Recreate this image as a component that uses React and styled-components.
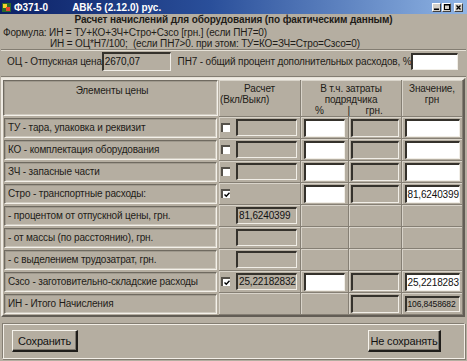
import React from 'react'
import styled, { createGlobalStyle } from 'styled-components'

const Global = createGlobalStyle`
  html, body { margin: 0; padding: 0; background: #b5aea1; }
  body { font-family: "Liberation Sans", Arial, sans-serif; }
`

const Window = styled.div`
  width: 467px;
  height: 361px;
  background: #b5aea1;
  color: #1e1c18;
  font-size: 10px;
  letter-spacing: -0.15px;
  display: flex;
  flex-direction: column;
  overflow: hidden;
`
const TitleBar = styled.div`
  height: 14px;
  flex-shrink: 0;
  display: flex;
  align-items: center;
  padding: 0 4px 0 2px;
  background: linear-gradient(90deg, #0c2166 0%, #2a4f9a 45%, #8fb4e4 100%);
  color: #fff;
  font-weight: bold;
  font-size: 10px;
  letter-spacing: 0;
`
const AppIcon = styled.svg`
  width: 9px;
  height: 11px;
  margin-right: 3px;
`
const TitleText = styled.span`
  margin-right: ${p => p.$gap || 0}px;
  white-space: nowrap;
`
const WinButtons = styled.div`
  margin-left: auto;
  display: flex;
  gap: 1px;
`
const WinButton = styled.div`
  width: 9px;
  height: 9px;
  box-sizing: border-box;
  background: #d4d0c8;
  border: 1px solid;
  border-color: #fff #404040 #404040 #fff;
  display: flex;
  align-items: center;
  justify-content: center;
  margin-left: ${p => p.$gap || 0}px;
`
const Heading = styled.div`
  text-align: center;
  font-weight: bold;
  font-size: 10px;
  letter-spacing: -0.1px;
  line-height: 10px;
  padding-top: 1px;
`
const Formula = styled.div`
  line-height: 11px;
  padding: 2px 0 0 3px;
  white-space: nowrap;
`
const FormulaLine = styled.div`
  padding-left: ${p => p.$indent || 0}px;
`
const PriceRow = styled.div`
  margin: 0 1px;
  height: 28px;
  flex-shrink: 0;
  box-sizing: border-box;
  border-top: 1px solid #837d72;
  border-bottom: 1px solid #837d72;
  box-shadow: inset 0 1px 0 #e6e1d7, 0 1px 0 #e6e1d7;
  display: flex;
  align-items: center;
  padding: 0 8px 3px 6px;
  white-space: nowrap;
`
const Field = styled.div`
  box-sizing: border-box;
  width: ${p => p.$w}px;
  height: ${p => p.$h || 17}px;
  background: ${p => (p.$white ? '#ffffff' : 'transparent')};
  border-style: solid;
  border-width: 2px 1px 1px 2px;
  border-color: #35322c #f1eee7 #f1eee7 #35322c;
  font-size: ${p => p.$small ? 8.5 : 10}px;
  line-height: ${p => (p.$h || 17) - 3}px;
  padding-left: 1px;
  overflow: hidden;
  white-space: nowrap;
  color: #111;
`
const PriceLabel = styled.span`
  margin-left: ${p => p.$gap || 0}px;
`
const Table = styled.div`
  margin: 1px 2px 0 1px;
  flex-shrink: 0;
  border: 2px solid;
  border-color: #efebe3 #625d55 #625d55 #efebe3;
  display: grid;
  grid-template-columns: 216px 82px 48px 53px 61px;
  grid-template-rows: 37px repeat(9, 22px);
`
const Cell = styled.div`
  box-sizing: border-box;
  border-right: 1px solid #857f74;
  border-bottom: 1px solid #857f74;
  box-shadow: inset 1px 1px 0 #d9d4ca;
  display: flex;
  align-items: center;
  justify-content: ${p => p.$left ? 'flex-start' : 'center'};
  padding-left: ${p => p.$left ? 2 : 0}px;
  gap: 6px;
  grid-column: ${p => p.$span ? `span ${p.$span}` : 'auto'};
`
const HeadCell = styled(Cell)`
  flex-direction: column;
  align-items: stretch;
  justify-content: flex-start;
  padding-top: 3px;
  line-height: 11px;
  gap: 0;
`
const HeadLine = styled.div`
  text-align: ${p => p.$align || 'center'};
  padding-left: ${p => p.$pad || 0}px;
  white-space: pre;
`
const LabelCell = styled.div`
  box-sizing: border-box;
  margin: 1px 2px 1px 1px;
  border: 1px solid;
  border-color: #6f6a60 #f4f1ea #f4f1ea #6f6a60;
  box-shadow: inset 1px 1px 0 #9f998d, inset -1px -1px 0 #cfcabf;
  padding: 3px 0 0 3px;
  white-space: nowrap;
  overflow: hidden;
`
const HeadLabel = styled(LabelCell)`
  margin: 0 1px 1px 0;
  text-align: center;
  padding-top: 4px;
`
const Check = styled.div`
  width: 9px;
  height: 9px;
  box-sizing: border-box;
  background: #fff;
  border-style: solid;
  border-width: 2px 0 0 2px;
  border-color: #55514a;
  flex-shrink: 0;
  display: flex;
  align-items: center;
  justify-content: center;
`
const Footer = styled.div`
  margin: 6px 2px 0 2px;
  height: 36px;
  flex-shrink: 0;
  box-sizing: border-box;
  border: 1px solid;
  border-color: #837d72 #f3efe7 #f3efe7 #837d72;
  box-shadow: inset 1px 1px 0 #f3efe7, 1px 1px 0 #837d72;
  display: flex;
  align-items: center;
  justify-content: space-between;
  padding: 0 23px 0 9px;
`
const Button = styled.div`
  box-sizing: border-box;
  width: ${p => p.$w}px;
  height: 22px;
  border-style: solid;
  border-width: 1px 2px 2px 1px;
  border-color: #f6f3ec #1f1d1a #1f1d1a #f6f3ec;
  box-shadow: inset -1px -1px 0 #7c776d;
  display: flex;
  align-items: center;
  justify-content: center;
  font-size: 11px;
  letter-spacing: -0.2px;
  color: #111;
`

const rows = [
  { label: 'ТУ - тара, упаковка и реквизит', check: false, calc: '', extra: true, value: '' },
  { label: 'КО - комплектация оборудования', check: false, calc: '', extra: true, value: '' },
  { label: 'ЗЧ - запасные части', check: false, calc: '', extra: true, value: '' },
  { label: 'Стро - транспортные расходы:', check: true, extra: true, value: '81,6240399' },
  { label: '- процентом от отпускной цены, грн.', calc: '81,6240399' },
  { label: '- от массы (по расстоянию), грн.', calc: '' },
  { label: '- с выделением трудозатрат, грн.', calc: '' },
  { label: 'Сзсо - заготовительно-складские расходы', check: true, calc: '25,221828325', extra: true, value: '25,2218283' },
  { label: 'ИН - Итого Начисления', total: true },
]

function CheckBox({ on }) {
  return (
    <Check>
      {on && (
        <svg width="6" height="6" viewBox="0 0 6 6">
          <path d="M0.5 2.5 L2.3 4.3 L5.5 0.8" stroke="#000" strokeWidth="1.4" fill="none" />
        </svg>
      )}
    </Check>
  )
}

export default function App() {
  return (
    <Window>
      <Global />
      <TitleBar>
        <AppIcon viewBox="0 0 9 11">
          <rect x="0" y="1" width="9" height="9" fill="#2d6b2a" />
          <rect x="1" y="2" width="4" height="4" fill="#f2d22e" />
          <rect x="4" y="5" width="4" height="4" fill="#e8452c" />
        </AppIcon>
        <TitleText $gap={24}>Ф371-0</TitleText>
        <TitleText>АВК-5 (2.12.0) рус.</TitleText>
        <WinButtons>
          <WinButton>
            <svg width="5" height="5" viewBox="0 0 5 5"><rect x="0" y="3.5" width="5" height="1.5" fill="#000" /></svg>
          </WinButton>
          <WinButton>
            <svg width="6" height="6" viewBox="0 0 6 6"><rect x="0.5" y="0.5" width="5" height="5" fill="none" stroke="#000" strokeWidth="1" /><rect x="0" y="0" width="6" height="1.5" fill="#000" /></svg>
          </WinButton>
          <WinButton $gap={2}>
            <svg width="5" height="5" viewBox="0 0 5 5"><path d="M0.5 0.5 L4.5 4.5 M4.5 0.5 L0.5 4.5" stroke="#000" strokeWidth="1.3" /></svg>
          </WinButton>
        </WinButtons>
      </TitleBar>

      <Heading>Расчет начислений для оборудования (по фактическим данным)</Heading>
      <Formula>
        <FormulaLine>Формула: ИН = ТУ+КО+ЗЧ+Стро+Сзсо [грн.] (если ПН7=0)</FormulaLine>
        <FormulaLine $indent={47}>ИН = ОЦ*Н7/100;&nbsp; (если ПН7&gt;0. при этом: ТУ=КО=ЗЧ=Стро=Сзсо=0)</FormulaLine>
      </Formula>

      <PriceRow>
        <PriceLabel>ОЦ - Отпускная цена</PriceLabel>
        <Field $w={71} $h={19}>2670,07</Field>
        <PriceLabel $gap={7}>ПН7 - общий процент дополнительных расходов, %</PriceLabel>
        <Field $w={48} $h={17} $white style={{ marginLeft: 'auto' }} />
      </PriceRow>

      <Table>
        <HeadLabel>Элементы цены</HeadLabel>
        <HeadCell>
          <HeadLine>Расчет</HeadLine>
          <HeadLine $align="left" $pad={1}>(Вкл/Выкл)</HeadLine>
        </HeadCell>
        <HeadCell $span={2}>
          <HeadLine>В т.ч. затраты</HeadLine>
          <HeadLine>подрядчика</HeadLine>
          <HeadLine $align="left" $pad={14}>{'%         |      грн.'}</HeadLine>
        </HeadCell>
        <HeadCell>
          <HeadLine>Значение,</HeadLine>
          <HeadLine>грн</HeadLine>
        </HeadCell>

        {rows.map(r => (
          <React.Fragment key={r.label}>
            <LabelCell>{r.label}</LabelCell>
            <Cell $left>
              {r.check !== undefined && <CheckBox on={r.check} />}
              {r.calc !== undefined && (
                <Field $w={61} style={{ marginLeft: r.check === undefined ? 15 : 0 }}>{r.calc}</Field>
              )}
            </Cell>
            <Cell>{r.extra && <Field $w={41} $h={18} $white />}</Cell>
            <Cell>{(r.extra || r.total) && <Field $w={48} $h={18} />}</Cell>
            <Cell>
              {r.extra && <Field $w={55} $h={18} $white>{r.value}</Field>}
              {r.total && <Field $w={55} $h={16} $small>106,8458682</Field>}
            </Cell>
          </React.Fragment>
        ))}
      </Table>

      <Footer>
        <Button $w={66}>Сохранить</Button>
        <Button $w={73}>Не сохранять</Button>
      </Footer>
    </Window>
  )
}
